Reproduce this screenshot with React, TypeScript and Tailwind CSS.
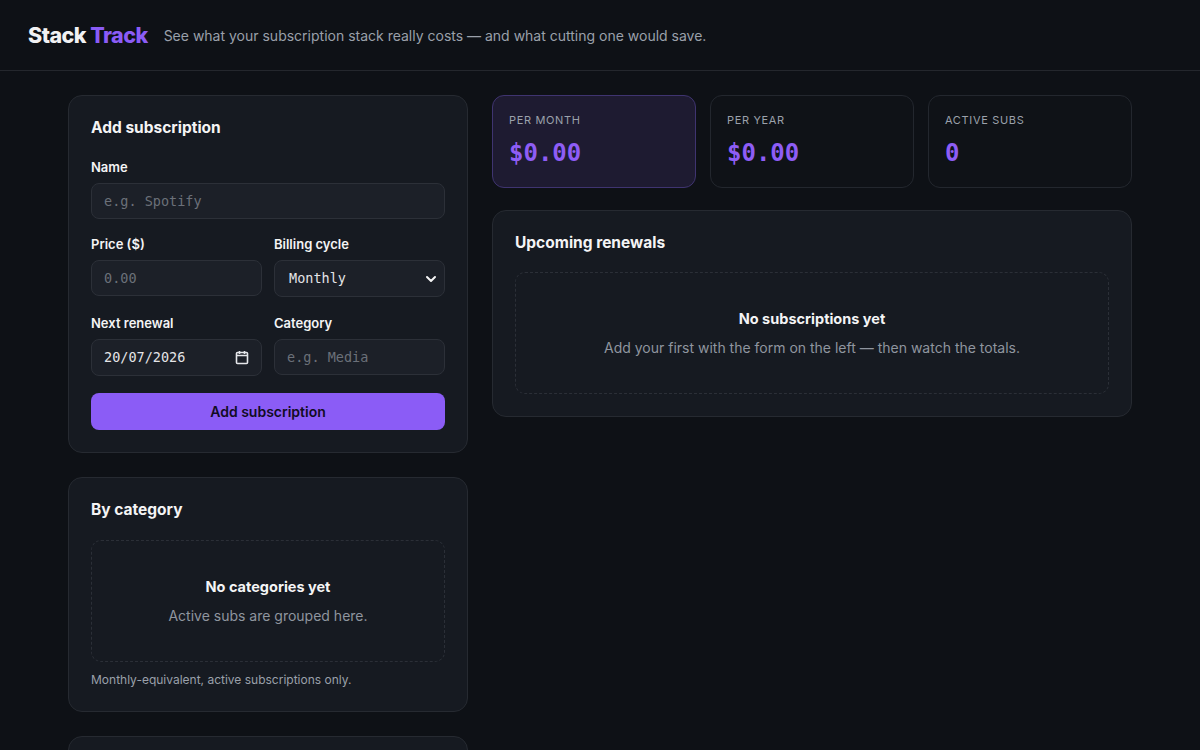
import { ChevronDown } from "lucide-react";

const mono = { fontFamily: '"DejaVu Sans Mono", "Liberation Mono", monospace' };

function Label({ children }: { children: React.ReactNode }) {
    return <div className="text-[13px] font-semibold text-zinc-100 mb-2 leading-4">{children}</div>;
}

const field =
    "h-9 w-full rounded-lg bg-[#1c2028] border border-[#2c3038] px-3 text-[13.5px] text-zinc-200 placeholder:text-[#6b7079] outline-none font-['DejaVu_Sans_Mono',monospace]";

function StatCard({ label, value, active }: { label: string; value: string; active?: boolean }) {
    return (
        <div
            className={
                "h-[93px] rounded-xl border px-4 pt-4 " +
                (active ? "bg-[#1e1b31] border-[#3f3470]" : "bg-[#0f1217] border-[#23272e]")
            }
        >
            <div className="text-[11px] tracking-[0.06em] text-[#9ba1ab] uppercase leading-4">{label}</div>
            <div className="mt-[11px] text-[24px] font-bold text-[#8e5df5] leading-7" style={mono}>
                {value}
            </div>
        </div>
    );
}

function Empty({ title, text }: { title: string; text: string }) {
    return (
        <div className="h-[122px] rounded-[10px] border border-dashed border-[#2b2f37] flex flex-col items-center justify-center">
            <div className="text-[14.5px] font-bold text-zinc-100">{title}</div>
            <div className="mt-[7px] text-[14px] text-[#8f959f]">{text}</div>
        </div>
    );
}

export default function App() {
    return (
        <div className="min-h-screen bg-[#0e1116] text-zinc-100" style={{ fontFamily: "Inter, 'Noto Sans', sans-serif" }}>
            <header className="h-[71px] border-b border-[#24272d] flex items-center px-7">
                <span className="text-[21.5px] font-extrabold tracking-tight text-[#f1f1f3]">
                    Stack <span className="text-[#8b5cf6]">Track</span>
                </span>
                <span className="ml-4 text-[14px] text-[#9aa0aa]">
                    See what your subscription stack really costs — and what cutting one would save.
                </span>
            </header>

            <main className="mx-auto w-[1064px] pt-6 grid grid-cols-[400px_640px] gap-6 items-start">
                {/* Left column */}
                <div className="flex flex-col gap-6">
                    <section className="rounded-[14px] border border-[#262a31] bg-[#161a21] px-[22px] pt-[22px] pb-[22px]">
                        <h2 className="text-[15.5px] font-bold leading-5 mb-[21px]">Add subscription</h2>
                        <Label>Name</Label>
                        <input className={field} placeholder="e.g. Spotify" />
                        <div className="grid grid-cols-2 gap-3 mt-[17px]">
                            <div>
                                <Label>Price ($)</Label>
                                <input className={field} placeholder="0.00" />
                            </div>
                            <div>
                                <Label>Billing cycle</Label>
                                <div className="relative">
                                    <div className={field + " h-[37px] flex items-center text-zinc-100 pl-[14px]"} style={mono}>
                                        Monthly
                                    </div>
                                    <ChevronDown className="absolute right-[6px] top-[11px] w-4 h-4 text-zinc-100" strokeWidth={3} />
                                </div>
                            </div>
                        </div>
                        <div className="grid grid-cols-2 gap-3 mt-[18px]">
                            <div>
                                <Label>Next renewal</Label>
                                <div className={field + " h-[37px] flex items-center justify-between text-zinc-100"} style={mono}>
                                    <span>20/07/2026</span>
                                    <svg width="14" height="15" viewBox="0 0 14 15" fill="none" stroke="#e5e7eb" strokeWidth="1.6">
                                        <rect x="1.5" y="2.5" width="11" height="11" rx="1" />
                                        <path d="M1.5 5.5h11M4.5 1v3M9.5 1v3" />
                                    </svg>
                                </div>
                            </div>
                            <div>
                                <Label>Category</Label>
                                <input className={field} placeholder="e.g. Media" />
                            </div>
                        </div>
                        <button className="mt-[17px] w-full h-[37px] rounded-lg bg-[#8b5cf6] text-[14px] font-semibold text-[#120c24]">
                            Add subscription
                        </button>
                    </section>

                    <section className="rounded-[14px] border border-[#262a31] bg-[#161a21] px-[22px] pt-[22px] pb-[22px]">
                        <h2 className="text-[15.5px] font-bold leading-5 mb-5">By category</h2>
                        <Empty title="No categories yet" text="Active subs are grouped here." />
                        <p className="mt-[9px] text-[12px] text-[#9aa0aa]">Monthly-equivalent, active subscriptions only.</p>
                    </section>

                    <section className="h-[120px] rounded-[14px] border border-[#262a31] bg-[#161a21]" />
                </div>

                {/* Right column */}
                <div className="flex flex-col gap-[22px]">
                    <div className="grid grid-cols-3 gap-[14px]">
                        <StatCard label="Per month" value="$0.00" active />
                        <StatCard label="Per year" value="$0.00" />
                        <StatCard label="Active subs" value="0" />
                    </div>
                    <section className="rounded-[14px] border border-[#262a31] bg-[#161a21] px-[22px] pt-[22px] pb-[22px]">
                        <h2 className="text-[15.5px] font-bold leading-5 mb-[19px]">Upcoming renewals</h2>
                        <Empty title="No subscriptions yet" text="Add your first with the form on the left — then watch the totals." />
                    </section>
                </div>
            </main>
        </div>
    );
}
